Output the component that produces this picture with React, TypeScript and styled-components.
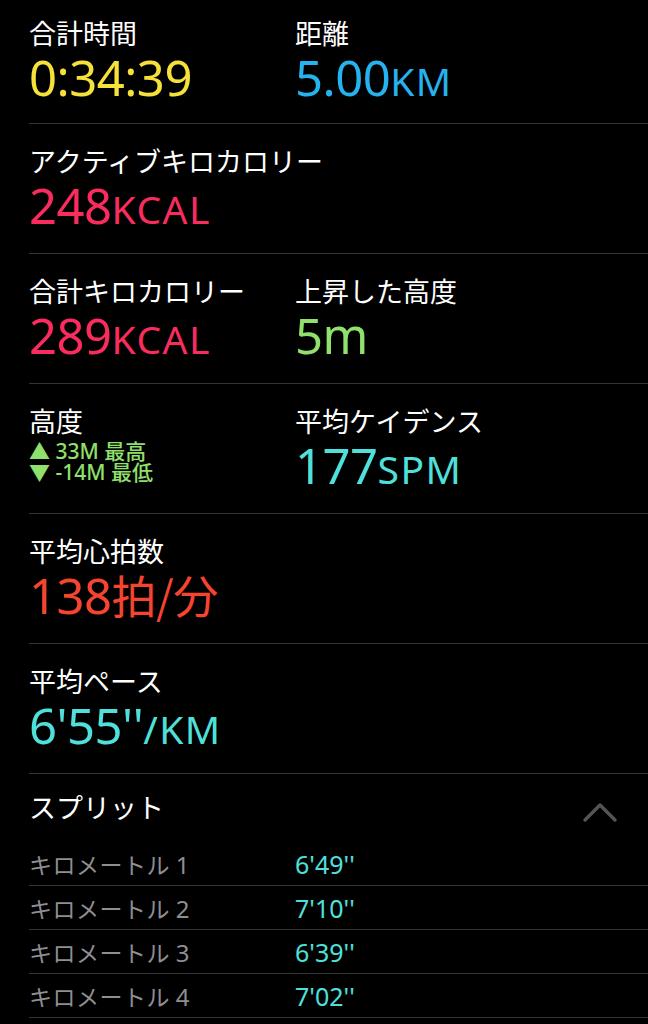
import React, { FC } from 'react';
import styled, { createGlobalStyle } from 'styled-components';

const Color = {
  background: '#000',
  divider: '#333335',
  label: '#ffffff',
  muted: '#8e8e93',
  yellow: '#f6e13a',
  blue: '#25b3ef',
  pink: '#f92c5d',
  green: '#8fe06c',
  cyan: '#4fe0dc',
  red: '#f5442f',
  chevron: '#545456',
};

const Font = {
  text: '"Noto Sans", "Noto Sans CJK JP", sans-serif',
  cjk: '"Noto Sans CJK JP", "Noto Sans", sans-serif',
};

const GlobalStyle = createGlobalStyle`
  html, body {
    margin: 0;
    padding: 0;
    background: ${Color.background};
  }
  body {
    font-family: ${Font.cjk};
    -webkit-font-smoothing: antialiased;
  }
`;

const Page = styled.div`
  width: 648px;
  height: 1024px;
  overflow: hidden;
  background: ${Color.background};
  padding-left: 29px;
  box-sizing: border-box;
`;

const Section = styled.section<{ $first?: boolean }>`
  display: grid;
  grid-template-columns: 266px 1fr;
  box-sizing: border-box;
  height: ${(p) => (p.$first ? 124 : 130)}px;
  padding-top: ${(p) => (p.$first ? 16 : 20)}px;
  border-bottom: 1px solid ${Color.divider};
`;

const Metric = styled.div`
  display: flex;
  flex-direction: column;
`;

const Label = styled.div`
  font-family: ${Font.cjk};
  font-size: 27px;
  line-height: 33px;
  color: ${Color.label};
  white-space: nowrap;
`;

const Value = styled.div<{ $color: string }>`
  font-family: ${Font.text};
  font-size: 49px;
  line-height: 56px;
  letter-spacing: -0.5px;
  color: ${(p) => p.$color};
  white-space: nowrap;
`;

const Unit = styled.span`
  font-size: 39px;
  letter-spacing: 1.5px;
`;

const Wide = styled.span`
  font-family: ${Font.cjk};
  font-size: 45px;
`;

const Range = styled.div`
  display: flex;
  flex-direction: column;
  margin-top: 4px;
  font-family: ${Font.text};
  font-size: 21px;
  line-height: 21px;
  font-weight: 500;
  color: ${Color.green};
  white-space: nowrap;
`;

const Splits = styled.section`
  display: flex;
  flex-direction: column;
`;

const SplitHeader = styled.div`
  display: flex;
  justify-content: space-between;
  align-items: flex-start;
  height: 68px;
  padding-top: 16px;
  padding-right: 30px;
  box-sizing: border-box;
`;

const SplitRow = styled.div`
  display: grid;
  grid-template-columns: 266px 1fr;
  align-items: center;
  height: 44px;
  box-sizing: border-box;
  border-bottom: 1px solid ${Color.divider};
`;

const SplitName = styled.span`
  font-family: ${Font.cjk};
  font-size: 23px;
  color: ${Color.muted};
  letter-spacing: 0.5px;
`;

const SplitNum = styled.span`
  font-family: ${Font.text};
  font-size: 24px;
`;

const SplitTime = styled.span`
  font-family: ${Font.text};
  font-size: 25px;
  color: ${Color.cyan};
`;

const Chevron: FC = () => (
  <svg width="36" height="22" viewBox="0 0 36 22" style={{ marginTop: 11 }}>
    <path
      d="M3 19 L18 4 L33 19"
      fill="none"
      stroke={Color.chevron}
      strokeWidth="3.4"
      strokeLinecap="round"
      strokeLinejoin="round"
    />
  </svg>
);

const splits = [
  { km: 1, time: `6'49''` },
  { km: 2, time: `7'10''` },
  { km: 3, time: `6'39''` },
  { km: 4, time: `7'02''` },
];

const App: FC = () => (
  <>
    <GlobalStyle />
    <Page>
      <Section $first>
        <Metric>
          <Label>合計時間</Label>
          <Value $color={Color.yellow}>0:34:39</Value>
        </Metric>
        <Metric>
          <Label>距離</Label>
          <Value $color={Color.blue}>
            5.00<Unit>KM</Unit>
          </Value>
        </Metric>
      </Section>

      <Section>
        <Metric>
          <Label>アクティブキロカロリー</Label>
          <Value $color={Color.pink}>
            248<Unit>KCAL</Unit>
          </Value>
        </Metric>
      </Section>

      <Section>
        <Metric>
          <Label>合計キロカロリー</Label>
          <Value $color={Color.pink}>
            289<Unit>KCAL</Unit>
          </Value>
        </Metric>
        <Metric>
          <Label>上昇した高度</Label>
          <Value $color={Color.green}>5m</Value>
        </Metric>
      </Section>

      <Section>
        <Metric>
          <Label>高度</Label>
          <Range>
            <span>▲ 33M 最高</span>
            <span>▼ -14M 最低</span>
          </Range>
        </Metric>
        <Metric>
          <Label>平均ケイデンス</Label>
          <Value $color={Color.cyan}>
            177<Unit>SPM</Unit>
          </Value>
        </Metric>
      </Section>

      <Section>
        <Metric>
          <Label>平均心拍数</Label>
          <Value $color={Color.red}>
            138<Wide>拍/分</Wide>
          </Value>
        </Metric>
      </Section>

      <Section>
        <Metric>
          <Label>平均ペース</Label>
          <Value $color={Color.cyan}>
            6'55''<Unit>/KM</Unit>
          </Value>
        </Metric>
      </Section>

      <Splits>
        <SplitHeader>
          <Label>スプリット</Label>
          <Chevron />
        </SplitHeader>
        {splits.map((s) => (
          <SplitRow key={s.km}>
            <SplitName>
              キロメートル <SplitNum>{s.km}</SplitNum>
            </SplitName>
            <SplitTime>{s.time}</SplitTime>
          </SplitRow>
        ))}
      </Splits>
    </Page>
  </>
);

export default App;
